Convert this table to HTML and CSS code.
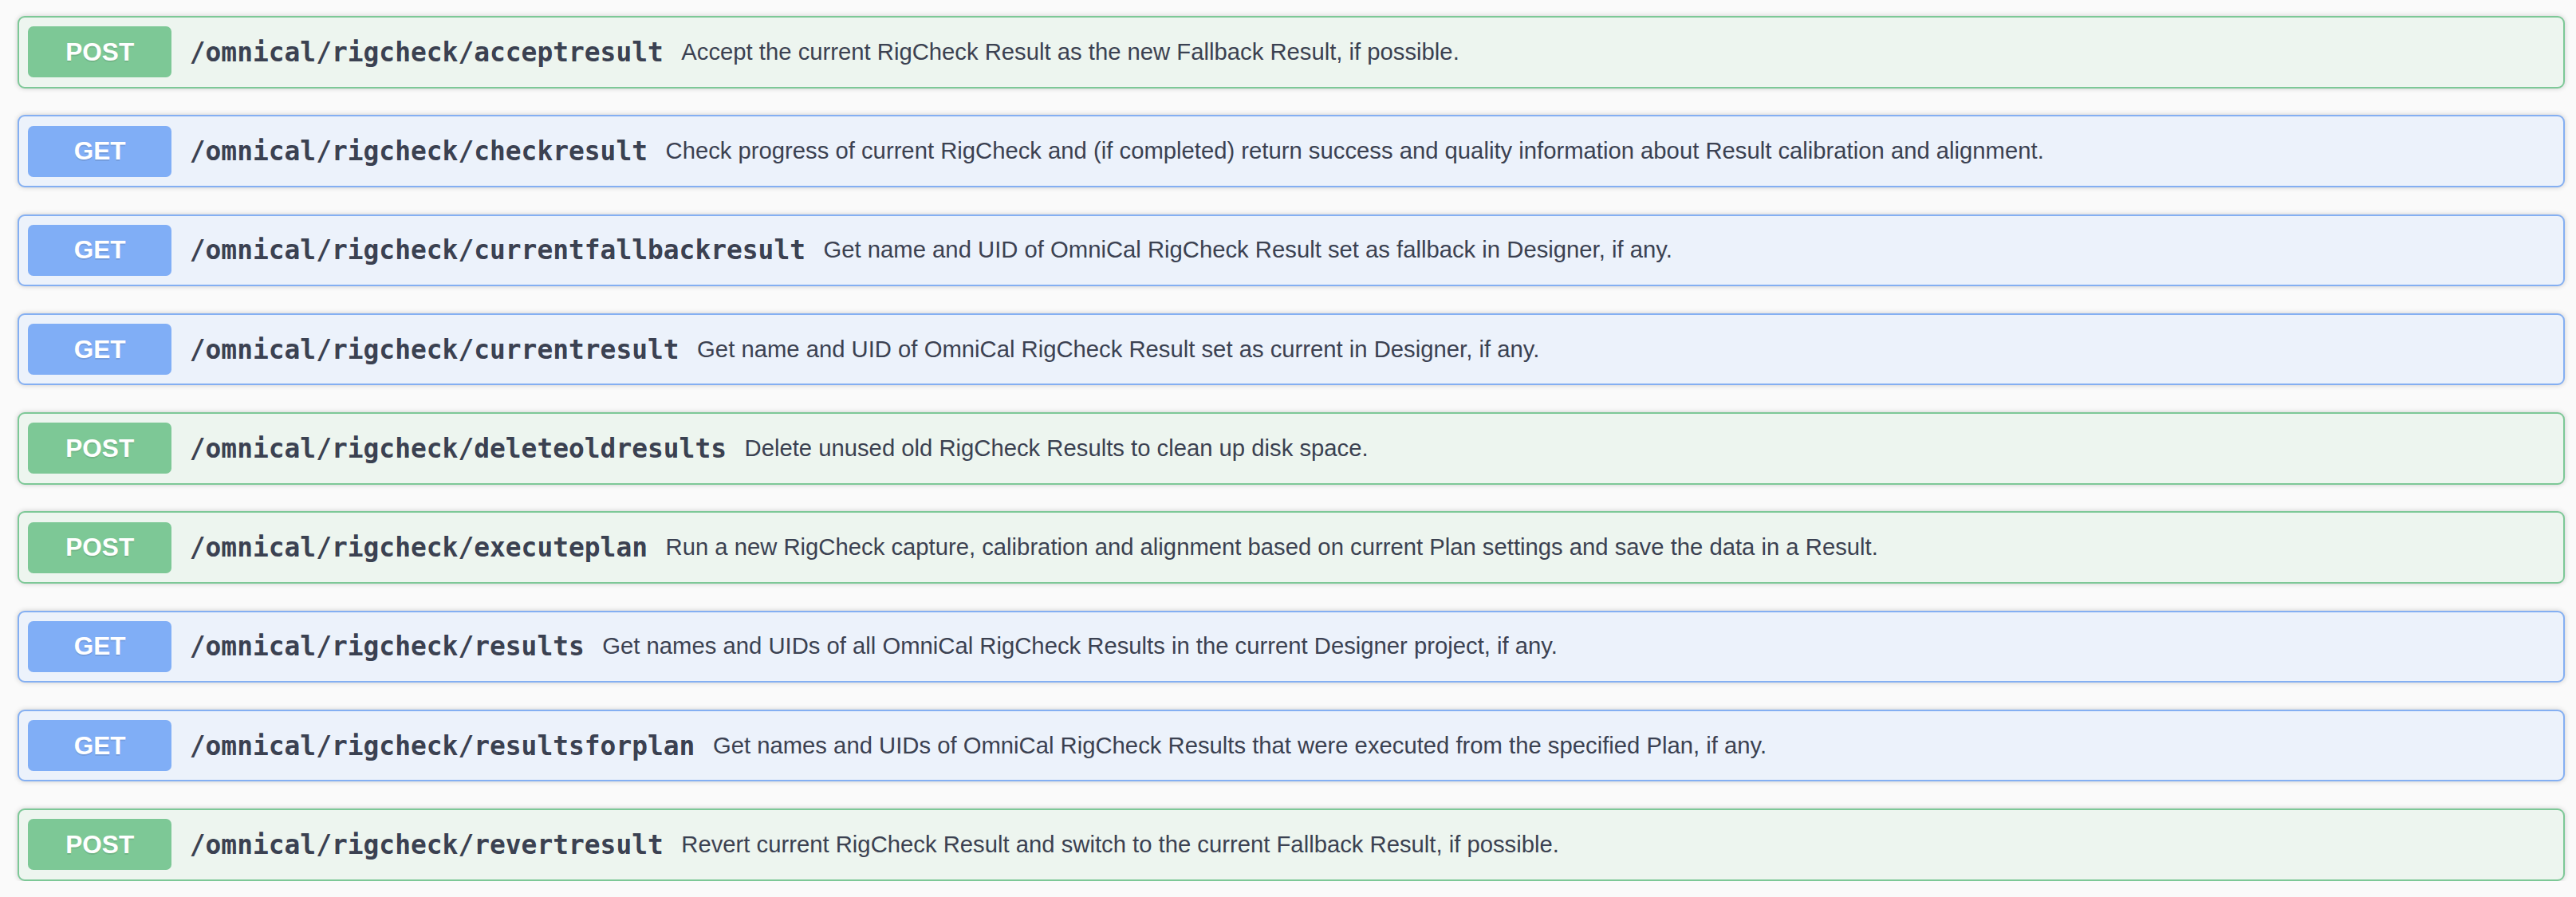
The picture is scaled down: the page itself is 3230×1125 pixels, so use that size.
FILE: index.html
```html
<!DOCTYPE html>
<html>
<head>
<meta charset="utf-8">
<link rel="stylesheet" href="styles.css">
</head>
<body>
<div class="ops">
  <div class="op op-post"><span class="method">POST</span><span class="path">/omnical/rigcheck/acceptresult</span><span class="desc">Accept the current RigCheck Result as the new Fallback Result, if possible.</span></div>
  <div class="op op-get"><span class="method">GET</span><span class="path">/omnical/rigcheck/checkresult</span><span class="desc">Check progress of current RigCheck and (if completed) return success and quality information about Result calibration and alignment.</span></div>
  <div class="op op-get"><span class="method">GET</span><span class="path">/omnical/rigcheck/currentfallbackresult</span><span class="desc">Get name and UID of OmniCal RigCheck Result set as fallback in Designer, if any.</span></div>
  <div class="op op-get"><span class="method">GET</span><span class="path">/omnical/rigcheck/currentresult</span><span class="desc">Get name and UID of OmniCal RigCheck Result set as current in Designer, if any.</span></div>
  <div class="op op-post"><span class="method">POST</span><span class="path">/omnical/rigcheck/deleteoldresults</span><span class="desc">Delete unused old RigCheck Results to clean up disk space.</span></div>
  <div class="op op-post"><span class="method">POST</span><span class="path">/omnical/rigcheck/executeplan</span><span class="desc">Run a new RigCheck capture, calibration and alignment based on current Plan settings and save the data in a Result.</span></div>
  <div class="op op-get"><span class="method">GET</span><span class="path">/omnical/rigcheck/results</span><span class="desc">Get names and UIDs of all OmniCal RigCheck Results in the current Designer project, if any.</span></div>
  <div class="op op-get"><span class="method">GET</span><span class="path">/omnical/rigcheck/resultsforplan</span><span class="desc">Get names and UIDs of OmniCal RigCheck Results that were executed from the specified Plan, if any.</span></div>
  <div class="op op-post"><span class="method">POST</span><span class="path">/omnical/rigcheck/revertresult</span><span class="desc">Revert current RigCheck Result and switch to the current Fallback Result, if possible.</span></div>
</div>
</body>
</html>
```
FILE: styles.css
```css
html, body {
  margin: 0;
  padding: 0;
  background: #fafafa;
}
.ops {
  padding: 20px 14px 0 22px;
  display: flex;
  flex-direction: column;
  gap: 33.75px;
}
.op {
  display: flex;
  align-items: center;
  padding: 11.25px;
  border: 2.25px solid;
  border-radius: 9px;
  box-shadow: 0 0 6.75px rgba(0, 0, 0, 0.19);
  color: #3b4151;
}
.op-post {
  background: #edf5ef;
  border-color: #7dc897;
}
.op-get {
  background: #ecf2fb;
  border-color: #84aff2;
}
.method {
  min-width: 180px;
  padding: 13.5px 0;
  border-radius: 6.75px;
  text-align: center;
  font-family: "Liberation Sans", Arial, sans-serif;
  font-weight: 700;
  font-size: 31.5px;
  line-height: 37px;
  color: #fff;
  text-shadow: 0 2px 0 rgba(0, 0, 0, 0.1);
}
.op-post .method { background: #7dc896; }
.op-get .method { background: #80aef6; }
.path {
  padding: 0 22.5px;
  font-family: "DejaVu Sans Mono", monospace;
  font-weight: 700;
  font-size: 32.9px;
  color: #3b4151;
  white-space: nowrap;
}
.desc {
  font-family: "Liberation Sans", Arial, sans-serif;
  font-size: 29.25px;
  color: #3b4151;
  white-space: nowrap;
}
```
